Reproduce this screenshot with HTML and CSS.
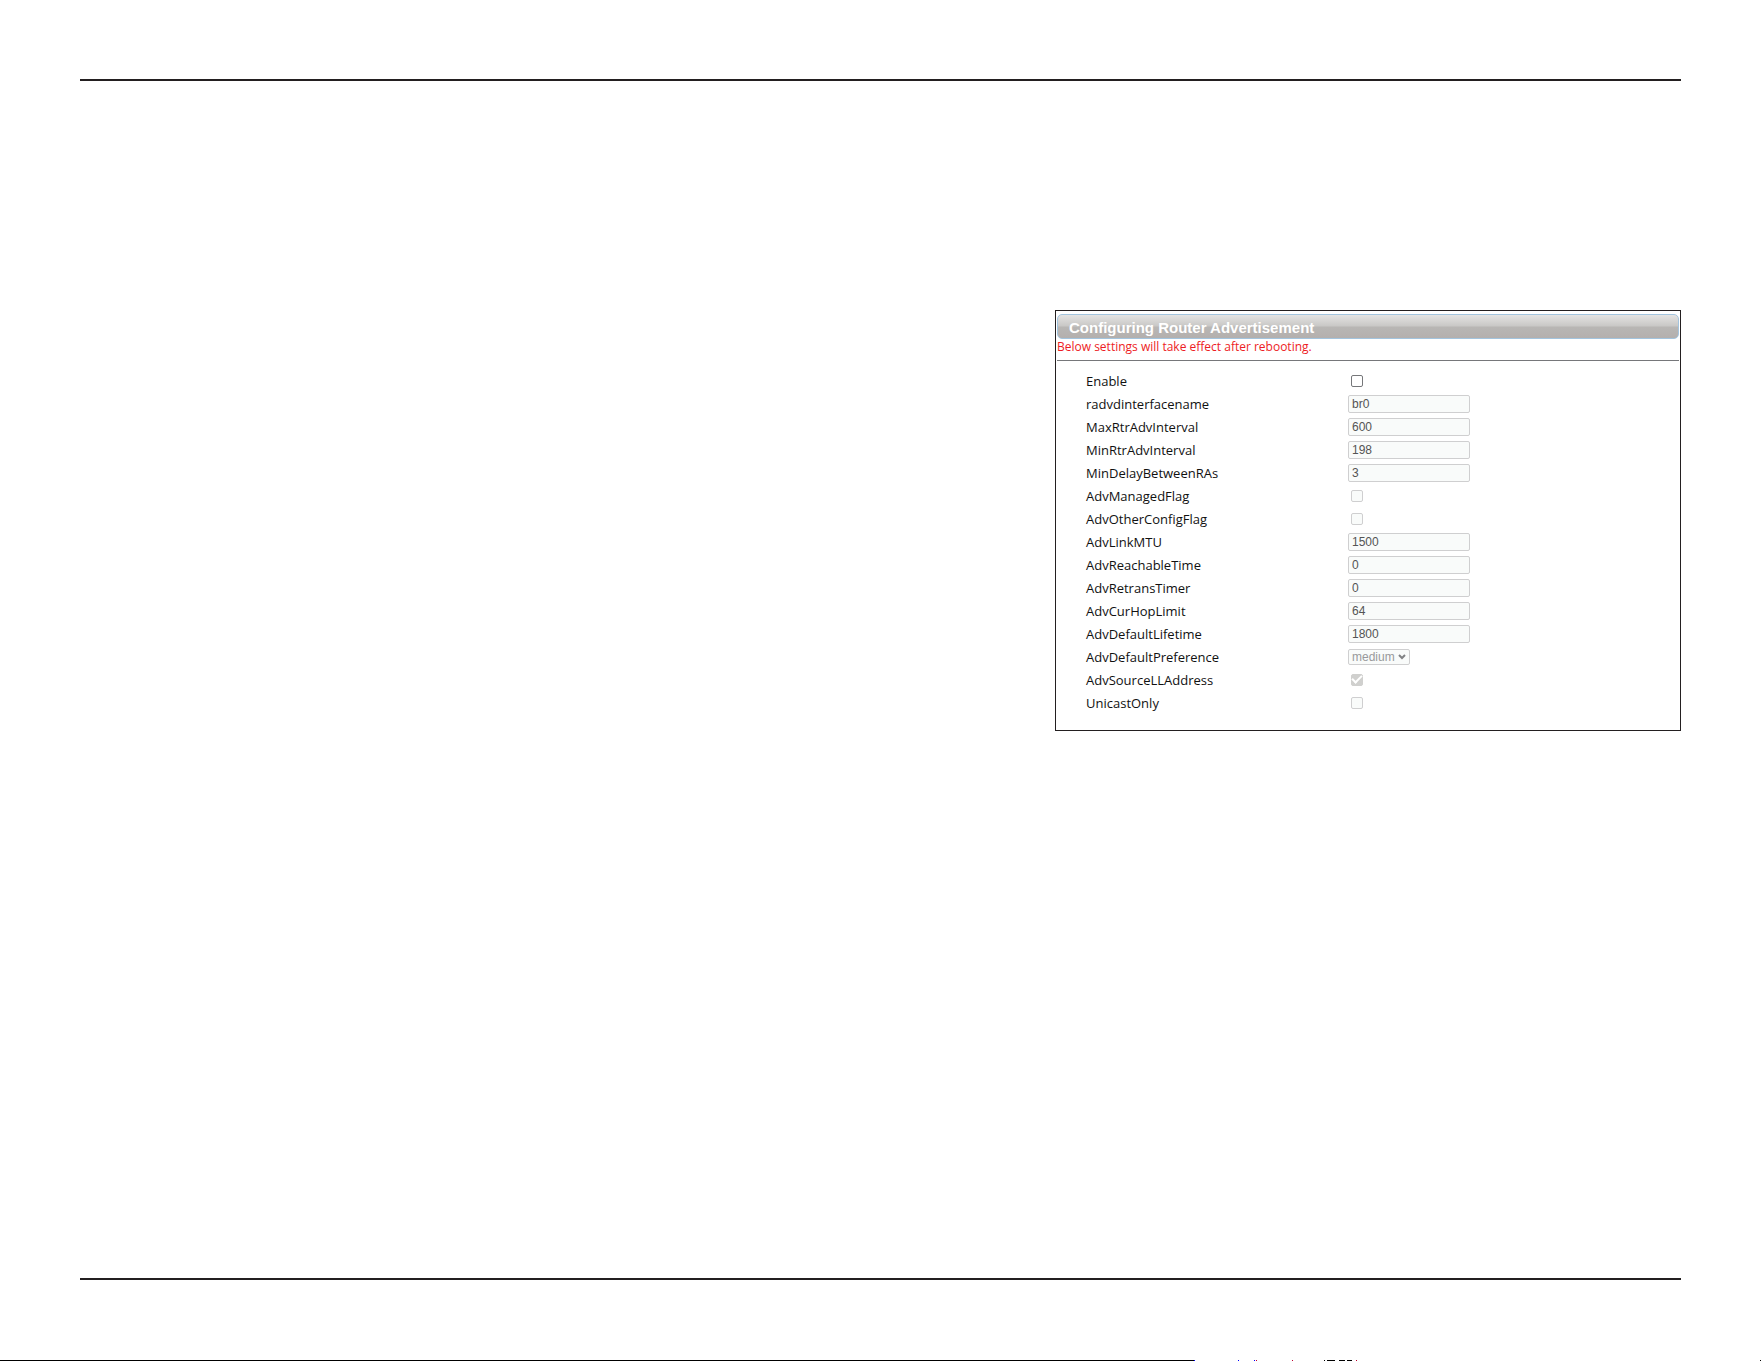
FILE: index.html
```html
<!DOCTYPE html>
<html lang="en">
<head>
<meta charset="utf-8">
<meta name="viewport" content="width=device-width, initial-scale=1">
<title>Configuring Router Advertisement</title>
<link rel="stylesheet" href="styles.css">
</head>
<body>
<main class="sheet">
  <form class="panel">
    <h1 class="panel-title">Configuring Router Advertisement</h1>
    <p class="notice">Below settings will take effect after rebooting.</p>
    <div class="fields">
      <div class="row"><label for="enable">Enable</label><input type="checkbox" id="enable"></div>
      <div class="row"><label for="ifname">radvdinterfacename</label><input type="text" id="ifname" value="br0" disabled></div>
      <div class="row"><label for="maxint">MaxRtrAdvInterval</label><input type="text" id="maxint" value="600" disabled></div>
      <div class="row"><label for="minint">MinRtrAdvInterval</label><input type="text" id="minint" value="198" disabled></div>
      <div class="row"><label for="delay">MinDelayBetweenRAs</label><input type="text" id="delay" value="3" disabled></div>
      <div class="row"><label for="managed">AdvManagedFlag</label><input type="checkbox" id="managed" disabled></div>
      <div class="row"><label for="other">AdvOtherConfigFlag</label><input type="checkbox" id="other" disabled></div>
      <div class="row"><label for="mtu">AdvLinkMTU</label><input type="text" id="mtu" value="1500" disabled></div>
      <div class="row"><label for="reach">AdvReachableTime</label><input type="text" id="reach" value="0" disabled></div>
      <div class="row"><label for="retrans">AdvRetransTimer</label><input type="text" id="retrans" value="0" disabled></div>
      <div class="row"><label for="hop">AdvCurHopLimit</label><input type="text" id="hop" value="64" disabled></div>
      <div class="row"><label for="life">AdvDefaultLifetime</label><input type="text" id="life" value="1800" disabled></div>
      <div class="row"><label for="pref">AdvDefaultPreference</label>
        <span class="select-box">
          <select id="pref" disabled><option>medium</option></select>
          <svg class="chevron" viewBox="0 0 8 6" aria-hidden="true"><path d="M1 1l3 3 3-3"/></svg>
        </span>
      </div>
      <div class="row"><label for="source">AdvSourceLLAddress</label><input type="checkbox" id="source" checked disabled></div>
      <div class="row"><label for="unicast">UnicastOnly</label><input type="checkbox" id="unicast" disabled></div>
    </div>
  </form>
</main>
<footer class="edge">
  <svg class="edge-marks" viewBox="0 0 1761 1" preserveAspectRatio="none" shape-rendering="crispEdges" aria-hidden="true">
    <path d="M0 0h1194v1H0zM1324 0h1v1h-1zM1327 0h8v1h-8zM1339 0h6v1h-6zM1347 0h5v1h-5zM1760 0h1v1h-1z"/>
    <path fill="#00f" d="M1194 0h1v1h-1zM1238 0h1v1h-1zM1254 0h1v1h-1z"/>
    <path fill="#c00030" d="M1256 0h1v1h-1zM1292 0h1v1h-1zM1356 0h1v1h-1z"/>
  </svg>
</footer>
</body>
</html>
```
FILE: styles.css
```css
* {
  box-sizing: border-box;
}

body {
  margin: 0;
  min-height: 100vh;
  display: flex;
  flex-direction: column;
  background: #fff;
  color: #111;
  font-family: "Open Sans", "Noto Sans", sans-serif;
  font-size: 13px;
}

.sheet {
  flex: 1;
  margin: 79px 80px 0;
  padding-top: 229px;
  border-top: 2px solid #231f20;
  border-bottom: 2px solid #231f20;
  display: grid;
  grid-template-columns: 975fr 626fr;
  align-items: start;
}

.panel {
  grid-column: 2;
  padding: 3px 1px 16px;
  border: 1px solid #231f20;
}

.panel-title {
  margin: 0;
  height: 25px;
  padding-left: 11px;
  border: 1px solid #a3c4de;
  border-radius: 5px;
  background: linear-gradient(#e4e3e2 0%, #c9c8c6 48%, #b8b6b4 52%, #b4b0ae 100%);
  color: #fff;
  font: bold 15px/25px "Liberation Sans", Arial, sans-serif;
}

.notice {
  margin: 0;
  height: 22px;
  border-bottom: 1px solid #76777a;
  color: #ed1c24;
  font-size: 12px;
  line-height: 16px;
}

.fields {
  padding: 8px 0 0 29px;
}

.row {
  display: grid;
  grid-template-columns: 262px 1fr;
  align-items: center;
  height: 23px;
}

.row input,
.row select {
  margin: 0;
  appearance: none;
  border: 1px solid #cfcfd0;
  border-radius: 2px;
  background: #f9fbfa;
  font: 12px "Liberation Sans", Arial, sans-serif;
}

.row input[type="text"] {
  width: 122px;
  height: 18px;
  padding: 0 3px;
  color: #545454;
}

.row input[type="checkbox"] {
  width: 12px;
  height: 12px;
  margin-left: 3px;
}

.row input[type="checkbox"]:enabled {
  border-color: #76777a;
  background: #fff;
}

.row input[type="checkbox"]:checked {
  border-color: #d0d0ce;
  background: #d0d0ce;
  display: grid;
  place-items: center;
}

.row input[type="checkbox"]:checked::before {
  content: "";
  width: 8px;
  height: 4px;
  margin-bottom: 3px;
  border: solid #fff;
  border-width: 0 0 2px 2px;
  transform: rotate(-45deg);
}

.select-box {
  display: grid;
  width: 62px;
  align-items: center;
}

.select-box > * {
  grid-area: 1 / 1;
}

.row select {
  width: 62px;
  height: 16px;
  padding: 0 3px;
  color: #98999b;
  opacity: 1;
}

.chevron {
  justify-self: end;
  width: 8px;
  height: 6px;
  margin-right: 4px;
  fill: none;
  stroke: #808184;
  stroke-width: 2;
}

.edge {
  height: 81px;
  display: flex;
  align-items: flex-end;
}

.edge-marks {
  display: block;
  width: 100%;
  height: 1px;
}
```
